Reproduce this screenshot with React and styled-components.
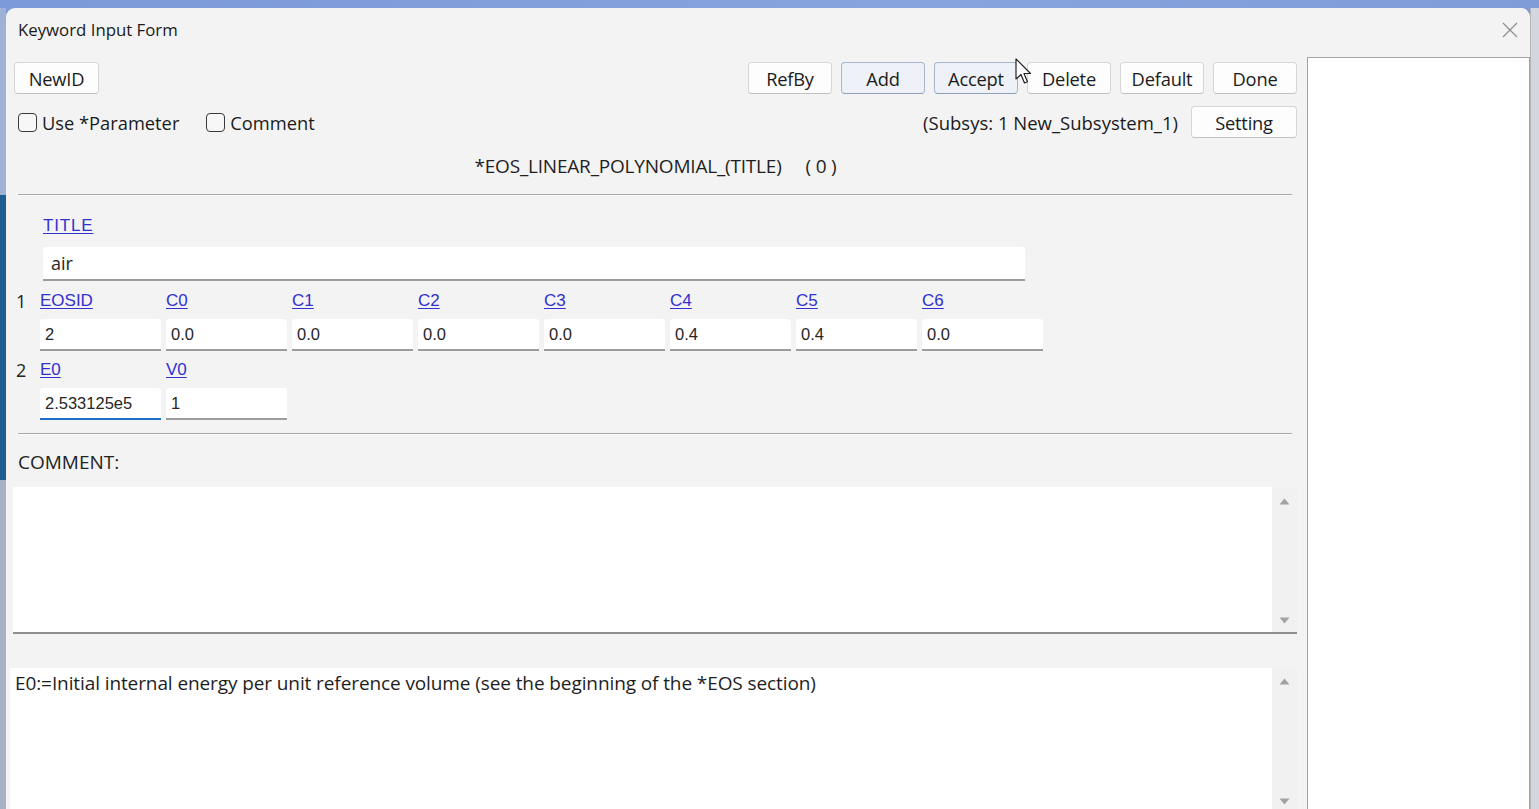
import React from 'react'
import styled, { createGlobalStyle } from 'styled-components'

const GlobalStyle = createGlobalStyle`
	html, body {
		margin: 0;
		padding: 0;
		overflow: hidden;
	}
	body {
		background: #c9ced8;
		font-family: "Open Sans", "Noto Sans", sans-serif;
		color: #1b1b1b;
	}
`

const Screen = styled.div`
	position: relative;
	display: flex;
	flex-direction: column;
	height: 809px;
	background: #7d9bd9;
`

const TopStrip = styled.div`
	height: 8px;
	background: linear-gradient(90deg, #7b98d8, #88a4de 60%, #7f9cd9);
`

const Middle = styled.div`
	display: flex;
	flex: 1;
	min-height: 0;
`

const LeftEdge = styled.div`
	display: flex;
	flex-direction: column;
	width: 6px;
`

const EdgePart = styled.div`
	height: ${props => props.$h}px;
	flex: ${props => (props.$grow ? 1 : 'none')};
	background: ${props => props.$color};
`

const RightEdge = styled.div`
	width: 8px;
	background: #d3d6dc;
	border-left: 1px solid #b4b4b4;
`

const Window = styled.div`
	display: flex;
	flex-direction: column;
	flex: 1;
	min-width: 0;
	background: #f3f3f3;
	border-top-left-radius: 9px;
	border-top-right-radius: 9px;
`

const TitleBar = styled.div`
	display: flex;
	align-items: center;
	justify-content: space-between;
	height: 49px;
	padding: 0 12px 6px 12px;
	box-sizing: border-box;
	font-size: 16.8px;
	color: #1a1a1a;
`

const CloseIcon = styled.svg`
	width: 16px;
	height: 16px;
`

const Body = styled.div`
	display: flex;
	flex: 1;
	min-height: 0;
`

const Main = styled.div`
	display: flex;
	flex-direction: column;
	flex: 1;
	min-width: 0;
	padding: 5px 10px 0 8px;
`

const SidePanel = styled.div`
	width: 223px;
	box-sizing: border-box;
	background: #ffffff;
	border: 1px solid #a3a3a3;
	border-bottom: none;
`

const Bar = styled.div`
	display: flex;
	align-items: center;
	height: 32px;
	margin-top: ${props => props.$top || 0}px;
`

const Spacer = styled.div`
	flex: 1;
`

const ButtonGroup = styled.div`
	display: flex;
	gap: 9px;
`

const Button = styled.button`
	width: ${props => props.$w || 84}px;
	height: 32px;
	padding: 0;
	font-family: "Open Sans", "Noto Sans", sans-serif;
	font-size: 18.3px;
	letter-spacing: -0.2px;
	color: #1b1b1b;
	background: ${props => (props.$primary ? '#eef2f8' : '#fdfdfd')};
	border: 1px solid ${props => (props.$primary ? '#a7b7cd' : '#d6d6d6')};
	border-bottom-color: ${props => (props.$primary ? '#8ea1bb' : '#c2c2c2')};
	border-radius: 4px;
`

const Check = styled.label`
	display: flex;
	align-items: center;
	gap: 5px;
	margin-left: ${props => props.$left || 0}px;
	font-size: 18.3px;
`

const Box = styled.span`
	width: 17px;
	height: 17px;
	border: 1.5px solid #3a3a3a;
	border-radius: 4px;
	background: #f7f7f7;
`

const Subsys = styled.span`
	margin-right: 13px;
	font-size: 18.5px;
`

const Heading = styled.div`
	display: flex;
	align-items: center;
	justify-content: center;
	height: 56px;
	font-size: 19px;
	color: #1f1f1f;
	letter-spacing: -0.2px;
`

const Count = styled.span`
	margin-left: 24px;
`

const Rule = styled.div`
	height: 0;
	margin: ${props => props.$top || 0}px 5px 0 4px;
	border-top: 1.5px solid #a8a8a8;
	border-bottom: 1px solid #fbfbfb;
`

const Link = styled.a`
	font-family: "Liberation Sans", Arial, sans-serif;
	font-size: 17px;
	line-height: 22px;
	color: #3131cf;
	text-decoration: underline;
	text-underline-offset: 2px;
	letter-spacing: ${props => props.$spread || 0}px;
`

const TitleField = styled.div`
	display: flex;
	flex-direction: column;
	align-items: flex-start;
	margin: 19px 0 0 29px;
`

const Field = styled.div`
	box-sizing: border-box;
	width: ${props => props.$w || 121}px;
	height: ${props => props.$h || 32}px;
	margin-top: ${props => props.$top || 0}px;
	padding: 0 ${props => props.$pad || 5}px;
	display: flex;
	align-items: center;
	background: #ffffff;
	border-radius: 3px 3px 0 0;
	border-bottom: 2px solid ${props => (props.$focus ? '#1b6fc8' : '#9c9c9c')};
	font-family: ${props =>
		props.$ui ? '"Open Sans", "Noto Sans", sans-serif' : '"Liberation Sans", Arial, sans-serif'};
	font-size: ${props => (props.$ui ? 18 : 16.5)}px;
	color: #262626;
`

const FieldRowBox = styled.div`
	display: flex;
	gap: 5px;
	margin: ${props => props.$top || 0}px 0 0 4px;
`

const RowNumber = styled.span`
	width: 17px;
	margin-left: -2px;
	margin-right: 2px;
	font-size: 18px;
	line-height: 22px;
	color: #222;
`

const FieldCell = styled.div`
	display: flex;
	flex-direction: column;
	align-items: flex-start;
	gap: 7px;
`

const SectionLabel = styled.div`
	margin: 16px 0 0 4px;
	font-size: 19px;
	line-height: 22px;
	color: #222;
`

const TextPanel = styled.div`
	display: flex;
	height: ${props => (props.$h ? `${props.$h}px` : 'auto')};
	flex: ${props => (props.$h ? 'none' : 1)};
	margin: ${props => props.$top}px 0 0 ${props => props.$shift}px;
	border-bottom: ${props => (props.$edge ? '2px solid #8f8f8f' : 'none')};
	box-sizing: border-box;
`

const TextArea = styled.div`
	flex: 1;
	padding: 3px 5px;
	background: #ffffff;
	font-size: 19px;
	line-height: 24px;
	letter-spacing: -0.1px;
	color: #1e1e1e;
`

const ScrollColumn = styled.div`
	display: flex;
	flex-direction: column;
	justify-content: space-between;
	align-items: center;
	width: 25px;
	padding: ${props => props.$pad};
	box-sizing: border-box;
	background: #f1f1f1;
`

const Arrow = styled.svg`
	width: 11px;
	height: 7px;
`

const Cursor = styled.svg`
	position: absolute;
	left: 1015px;
	top: 58px;
	width: 19px;
	height: 28px;
`

function ScrollArrows({ pad }) {
	return (
		<ScrollColumn $pad={pad}>
			<Arrow viewBox="0 0 11 7">
				<path d="M5.5 0.5 L10.5 6.5 L0.5 6.5 Z" fill="#a2a2a2" />
			</Arrow>
			<Arrow viewBox="0 0 11 7">
				<path d="M0.5 0.5 L10.5 0.5 L5.5 6.5 Z" fill="#a2a2a2" />
			</Arrow>
		</ScrollColumn>
	)
}

const row1 = [
	['EOSID', '2'],
	['C0', '0.0'],
	['C1', '0.0'],
	['C2', '0.0'],
	['C3', '0.0'],
	['C4', '0.4'],
	['C5', '0.4'],
	['C6', '0.0'],
]

const row2 = [
	['E0', '2.533125e5', true],
	['V0', '1'],
]

function FieldRow({ number, fields, top }) {
	return (
		<FieldRowBox $top={top}>
			<RowNumber>{number}</RowNumber>
			{fields.map(([name, value, focus]) => (
				<FieldCell key={name}>
					<Link>{name}</Link>
					<Field $focus={focus}>{value}</Field>
				</FieldCell>
			))}
		</FieldRowBox>
	)
}

export default function App() {
	return (
		<Screen>
			<GlobalStyle />
			<TopStrip />
			<Middle>
				<LeftEdge>
					<EdgePart $h={187} $color="#9fb1d4" />
					<EdgePart $h={285} $color="#1f5e90" />
					<EdgePart $grow $color="#a7b0c4" />
				</LeftEdge>
				<Window>
					<TitleBar>
						<span>Keyword Input Form</span>
						<CloseIcon viewBox="0 0 16 16">
							<path d="M1 1 L15 15 M15 1 L1 15" stroke="#8d8d8d" strokeWidth="1.2" />
						</CloseIcon>
					</TitleBar>
					<Body>
						<Main>
							<Bar>
								<Button $w={85}>NewID</Button>
								<Spacer />
								<ButtonGroup>
									<Button>RefBy</Button>
									<Button $primary>Add</Button>
									<Button $primary>Accept</Button>
									<Button>Delete</Button>
									<Button>Default</Button>
									<Button>Done</Button>
								</ButtonGroup>
							</Bar>
							<Bar $top={12}>
								<Check $left={4}>
									<Box />
									Use *Parameter
								</Check>
								<Check $left={27}>
									<Box />
									Comment
								</Check>
								<Spacer />
								<Subsys>(Subsys: 1 New_Subsystem_1)</Subsys>
								<Button $w={106}>Setting</Button>
							</Bar>
							<Heading>
								<span>*EOS_LINEAR_POLYNOMIAL_(TITLE)</span>
								<Count>( 0 )</Count>
							</Heading>
							<Rule />
							<TitleField>
								<Link $spread={0.8}>TITLE</Link>
								<Field $w={982} $h={34} $top={10} $pad={8} $ui>
									air
								</Field>
							</TitleField>
							<FieldRow number="1" fields={row1} top={9} />
							<FieldRow number="2" fields={row2} top={8} />
							<Rule $top={13} />
							<SectionLabel>COMMENT:</SectionLabel>
							<TextPanel $h={147} $top={14} $shift={-1} $edge>
								<TextArea />
								<ScrollArrows pad="11px 0 8px" />
							</TextPanel>
							<TextPanel $top={34} $shift={-4}>
								<TextArea>
									E0:=Initial internal energy per unit reference volume (see the beginning of
									the *EOS section)
								</TextArea>
								<ScrollArrows pad="10px 0 4px" />
							</TextPanel>
						</Main>
						<SidePanel />
					</Body>
				</Window>
				<RightEdge />
			</Middle>
			<Cursor viewBox="0 0 19 28">
				<path
					d="M1 1 L1 21 L6 16.5 L9.5 25 L12.5 23.8 L9 15.5 L15.5 15.5 Z"
					fill="#ffffff"
					stroke="#222"
					strokeWidth="1.2"
					strokeLinejoin="round"
				/>
			</Cursor>
		</Screen>
	)
}
